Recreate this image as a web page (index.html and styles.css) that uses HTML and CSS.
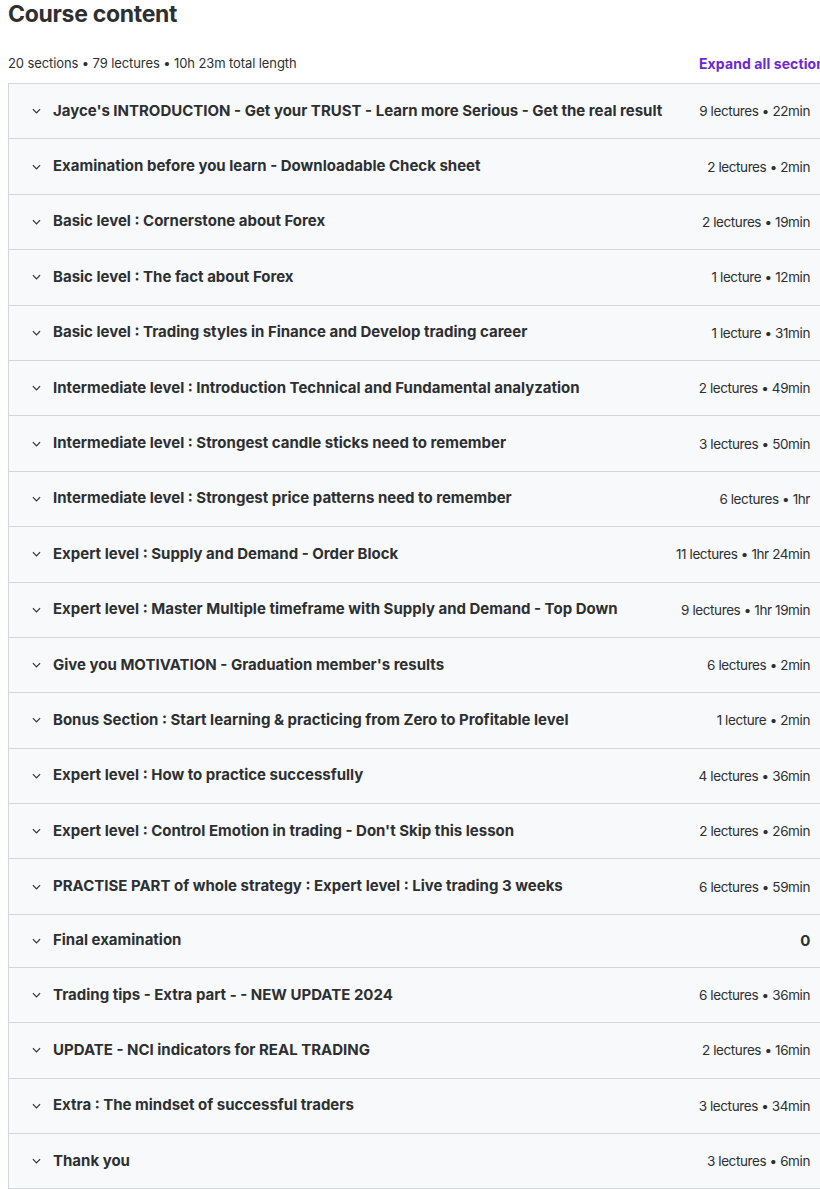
FILE: index.html
```html
<!DOCTYPE html>
<html lang="en">
  <head>
    <meta charset="UTF-8" />
    <meta name="viewport" content="width=device-width, initial-scale=1.0" />
    <title>Course content</title>
    <link rel="stylesheet" href="styles.css">
  </head>
  <body>
    <div class="curriculum">
      <h2 class="title">Course content</h2>

      <div class="summary">
        <span>20 sections • 79 lectures • 10h 23m total length</span>
        <button class="expand">Expand all sections</button>
      </div>

      <div class="sections">
        <div class="section">
          <span class="chevron"><svg viewBox="0 0 10 6"><path d="M1 1l4 4 4-4" /></svg></span>
          <span class="name">Jayce's INTRODUCTION - Get your TRUST - Learn more Serious - Get the real result</span>
          <span class="meta">9 lectures • 22min</span>
        </div>
        <div class="section">
          <span class="chevron"><svg viewBox="0 0 10 6"><path d="M1 1l4 4 4-4" /></svg></span>
          <span class="name">Examination before you learn - Downloadable Check sheet</span>
          <span class="meta">2 lectures • 2min</span>
        </div>
        <div class="section">
          <span class="chevron"><svg viewBox="0 0 10 6"><path d="M1 1l4 4 4-4" /></svg></span>
          <span class="name">Basic level : Cornerstone about Forex</span>
          <span class="meta">2 lectures • 19min</span>
        </div>
        <div class="section">
          <span class="chevron"><svg viewBox="0 0 10 6"><path d="M1 1l4 4 4-4" /></svg></span>
          <span class="name">Basic level : The fact about Forex</span>
          <span class="meta">1 lecture • 12min</span>
        </div>
        <div class="section">
          <span class="chevron"><svg viewBox="0 0 10 6"><path d="M1 1l4 4 4-4" /></svg></span>
          <span class="name">Basic level : Trading styles in Finance and Develop trading career</span>
          <span class="meta">1 lecture • 31min</span>
        </div>
        <div class="section">
          <span class="chevron"><svg viewBox="0 0 10 6"><path d="M1 1l4 4 4-4" /></svg></span>
          <span class="name">Intermediate level : Introduction Technical and Fundamental analyzation</span>
          <span class="meta">2 lectures • 49min</span>
        </div>
        <div class="section">
          <span class="chevron"><svg viewBox="0 0 10 6"><path d="M1 1l4 4 4-4" /></svg></span>
          <span class="name">Intermediate level : Strongest candle sticks need to remember</span>
          <span class="meta">3 lectures • 50min</span>
        </div>
        <div class="section">
          <span class="chevron"><svg viewBox="0 0 10 6"><path d="M1 1l4 4 4-4" /></svg></span>
          <span class="name">Intermediate level : Strongest price patterns need to remember</span>
          <span class="meta">6 lectures • 1hr</span>
        </div>
        <div class="section">
          <span class="chevron"><svg viewBox="0 0 10 6"><path d="M1 1l4 4 4-4" /></svg></span>
          <span class="name">Expert level : Supply and Demand - Order Block</span>
          <span class="meta">11 lectures • 1hr 24min</span>
        </div>
        <div class="section">
          <span class="chevron"><svg viewBox="0 0 10 6"><path d="M1 1l4 4 4-4" /></svg></span>
          <span class="name">Expert level : Master Multiple timeframe with Supply and Demand - Top Down</span>
          <span class="meta">9 lectures • 1hr 19min</span>
        </div>
        <div class="section">
          <span class="chevron"><svg viewBox="0 0 10 6"><path d="M1 1l4 4 4-4" /></svg></span>
          <span class="name">Give you MOTIVATION - Graduation member's results</span>
          <span class="meta">6 lectures • 2min</span>
        </div>
        <div class="section">
          <span class="chevron"><svg viewBox="0 0 10 6"><path d="M1 1l4 4 4-4" /></svg></span>
          <span class="name">Bonus Section : Start learning &amp; practicing from Zero to Profitable level</span>
          <span class="meta">1 lecture • 2min</span>
        </div>
        <div class="section">
          <span class="chevron"><svg viewBox="0 0 10 6"><path d="M1 1l4 4 4-4" /></svg></span>
          <span class="name">Expert level : How to practice successfully</span>
          <span class="meta">4 lectures • 36min</span>
        </div>
        <div class="section">
          <span class="chevron"><svg viewBox="0 0 10 6"><path d="M1 1l4 4 4-4" /></svg></span>
          <span class="name">Expert level : Control Emotion in trading - Don't Skip this lesson</span>
          <span class="meta">2 lectures • 26min</span>
        </div>
        <div class="section">
          <span class="chevron"><svg viewBox="0 0 10 6"><path d="M1 1l4 4 4-4" /></svg></span>
          <span class="name">PRACTISE PART of whole strategy : Expert level : Live trading 3 weeks</span>
          <span class="meta">6 lectures • 59min</span>
        </div>
        <div class="section section-empty">
          <span class="chevron"><svg viewBox="0 0 10 6"><path d="M1 1l4 4 4-4" /></svg></span>
          <span class="name">Final examination</span>
          <span class="meta meta-bold">0</span>
        </div>
        <div class="section">
          <span class="chevron"><svg viewBox="0 0 10 6"><path d="M1 1l4 4 4-4" /></svg></span>
          <span class="name">Trading tips - Extra part - - NEW UPDATE 2024</span>
          <span class="meta">6 lectures • 36min</span>
        </div>
        <div class="section">
          <span class="chevron"><svg viewBox="0 0 10 6"><path d="M1 1l4 4 4-4" /></svg></span>
          <span class="name">UPDATE - NCI indicators for REAL TRADING</span>
          <span class="meta">2 lectures • 16min</span>
        </div>
        <div class="section">
          <span class="chevron"><svg viewBox="0 0 10 6"><path d="M1 1l4 4 4-4" /></svg></span>
          <span class="name">Extra : The mindset of successful traders</span>
          <span class="meta">3 lectures • 34min</span>
        </div>
        <div class="section">
          <span class="chevron"><svg viewBox="0 0 10 6"><path d="M1 1l4 4 4-4" /></svg></span>
          <span class="name">Thank you</span>
          <span class="meta">3 lectures • 6min</span>
        </div>
      </div>
    </div>
  </body>
</html>
```

FILE: styles.css
```css
html,
body {
  overflow: hidden;
}
body {
  font-family: "Inter", "Liberation Sans", sans-serif;
  margin: 0;
  padding: 0 0 0 8px;
  background-color: white;
  color: #2d2f31;
}
.curriculum {
  width: 830px;
}
.title {
  margin: 0;
  padding-top: 0;
  font-size: 23px;
  font-weight: 700;
  line-height: 28px;
  letter-spacing: -0.3px;
}
.summary {
  display: flex;
  justify-content: space-between;
  align-items: center;
  margin-top: 24px;
  height: 22px;
  margin-bottom: 9px;
  font-size: 13px;
  letter-spacing: -0.1px;
}
.expand {
  background: none;
  border: none;
  padding: 0;
  margin-right: 5px;
  font-family: inherit;
  font-size: 14px;
  font-weight: 700;
  color: #6d28d2;
  letter-spacing: 0.1px;
  cursor: pointer;
}
.sections {
  border: 1px solid #d1d7dc;
  border-bottom: none;
}
.section {
  display: flex;
  align-items: center;
  height: 54.4px;
  padding: 0 27px 0 22px;
  background-color: #f7f9fa;
  border-bottom: 1px solid #d1d7dc;
}
.section-empty {
  height: 52px;
}
.chevron {
  display: flex;
  width: 10px;
  margin-left: 1px;
  margin-right: 11px;
}
.chevron svg {
  width: 9px;
  height: 6px;
  fill: none;
  stroke: #2d2f31;
  stroke-width: 1.3;
}
.name {
  flex: 1;
  font-size: 15px;
  font-weight: 700;
  letter-spacing: 0;
  margin-top: -2px;
}
.meta {
  font-size: 13.5px;
  color: #2d2f31;
  letter-spacing: -0.4px;
}
.meta-bold {
  font-weight: 700;
  font-size: 15px;
}
```
